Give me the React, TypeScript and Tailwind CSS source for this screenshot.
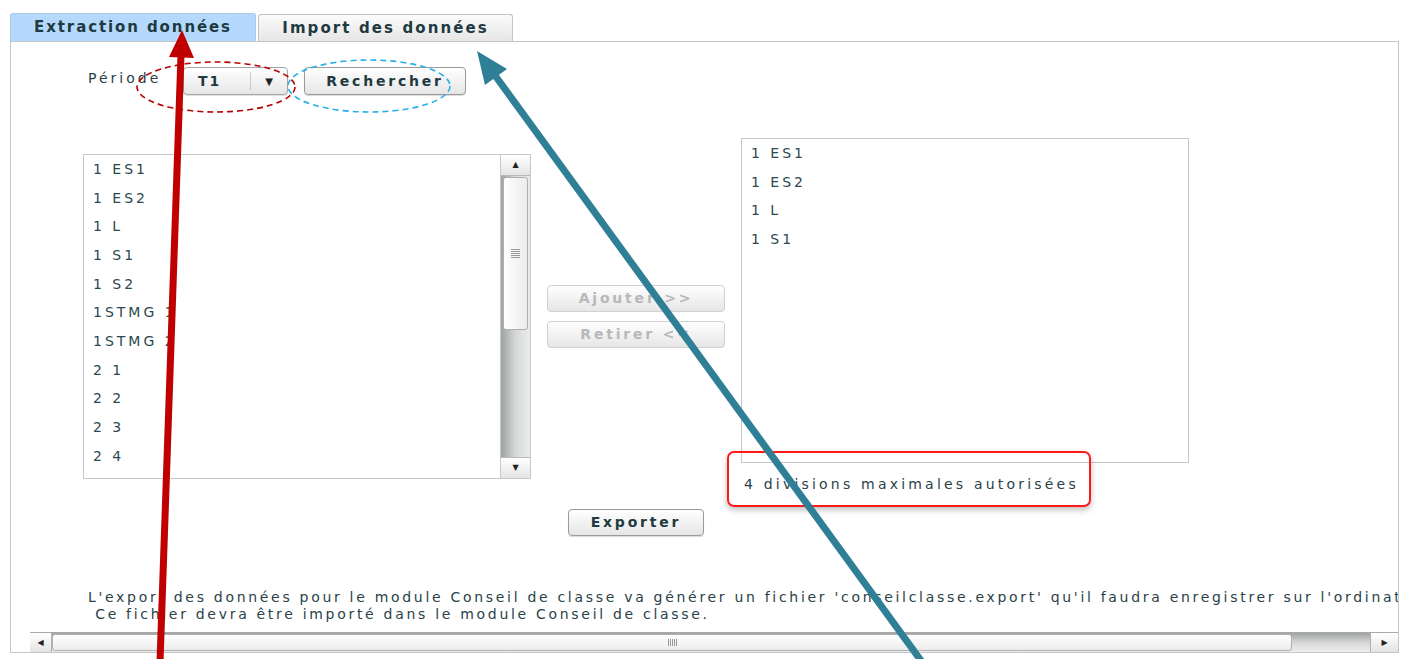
const leftItems = ["1 ES1", "1 ES2", "1 L", "1 S1", "1 S2", "1STMG 1", "1STMG 2", "2 1", "2 2", "2 3", "2 4"];
const rightItems = ["1 ES1", "1 ES2", "1 L", "1 S1"];

const font = { fontFamily: '"DejaVu Sans", Verdana, sans-serif' };

const Btn = ({ label, disabled, className }: { label: string; disabled?: boolean; className: string }) => (
  <button
    className={`${className} rounded-[4px] border text-[14px] font-bold tracking-[2.8px] bg-gradient-to-b from-white to-[#e6e6e6] ${
      disabled ? "border-[#d0d0d0] text-[#b8b8b8]" : "border-[#9a9a9a] text-[#1f3a40] shadow-[0_1px_1px_rgba(0,0,0,0.15)]"
    }`}
  >
    {label}
  </button>
);

const VScroll = () => (
  <div className="w-[30px] h-full flex flex-col border-l border-[#c8c8c8] bg-gradient-to-r from-[#9ea2a2] via-[#d6d8d8] to-[#ececec]">
    <div className="h-[21px] bg-gradient-to-b from-white to-[#e4e4e4] border-b border-[#b8b8b8] flex items-center justify-center text-[8px] text-[#222]">▲</div>
    <div className="h-[153px] mx-[2px] mt-[1px] rounded-[3px] border border-[#b0b0b0] bg-gradient-to-r from-white to-[#ececec] flex items-center justify-center">
      <div className="flex flex-col gap-[1px]">
        <div className="w-[9px] h-[1px] bg-[#999]" />
        <div className="w-[9px] h-[1px] bg-[#999]" />
        <div className="w-[9px] h-[1px] bg-[#999]" />
        <div className="w-[9px] h-[1px] bg-[#999]" />
        <div className="w-[9px] h-[1px] bg-[#999]" />
      </div>
    </div>
    <div className="flex-1" />
    <div className="h-[21px] bg-gradient-to-b from-white to-[#e4e4e4] border-t border-[#b8b8b8] flex items-center justify-center text-[8px] text-[#222]">▼</div>
  </div>
);

const App = () => {
  return (
    <div className="relative w-[1412px] h-[659px] overflow-hidden bg-white" style={font}>
      {/* tabs */}
      <div className="flex items-end pl-[10px] pt-[13px] h-[41px]">
        <div className="w-[246px] h-[28px] bg-[#b4d9fd] rounded-t-[3px] border border-b-0 border-[#a9c9e6] flex items-center justify-center text-[15px] font-bold tracking-[1.9px] text-[#1e3a40]">
          Extraction données
        </div>
        <div className="ml-[2px] w-[255px] h-[27px] rounded-t-[3px] border border-b-0 border-[#c4c4c4] bg-gradient-to-b from-[#fbfbfb] to-[#e6e6e6] flex items-center justify-center text-[15px] font-bold tracking-[2.1px] text-[#1e3a40]">
          Import des données
        </div>
      </div>

      {/* panel */}
      <div className="ml-[10px] w-[1389px] h-[612px] border border-[#c2c6c6] flex flex-col overflow-hidden">
        <div className="flex items-center mt-[25px] pl-[77px] h-[28px]">
          <span className="w-[95px] text-[14px] tracking-[3px] text-[#2b4248] -mt-[6px]">Période</span>
          <div className="w-[105px] h-[28px] rounded-[4px] border border-[#a4a4a4] bg-gradient-to-b from-white to-[#e6e6e6] flex items-center shadow-[0_1px_1px_rgba(0,0,0,0.12)]">
            <span className="pl-[14px] w-[66px] text-[14px] font-bold tracking-[2px] text-[#1f3a40]">T1</span>
            <div className="w-[1px] h-[18px] bg-[#c8c8c8]" />
            <span className="flex-1 text-center text-[10px] text-[#222]">▼</span>
          </div>
          <Btn label="Rechercher" className="ml-[16px] w-[162px] h-[28px]" />
        </div>

        <div className="flex items-start mt-[43px] pl-[72px]">
          {/* left list */}
          <div className="mt-[16px] w-[448px] h-[325px] border border-[#c4c8c8] flex">
            <div className="flex-1 pl-[9px] flex flex-col">
              {leftItems.map((it) => (
                <div key={it} className="h-[28.7px] flex items-center text-[14px] tracking-[3px] text-[#2a4950] whitespace-pre">
                  {it}
                </div>
              ))}
            </div>
            <VScroll />
          </div>

          {/* middle */}
          <div className="ml-[16px] mt-[147px] w-[178px] flex flex-col items-center">
            <Btn label="Ajouter >>" disabled className="w-[178px] h-[27px]" />
            <Btn label="Retirer <<" disabled className="mt-[9px] w-[178px] h-[27px]" />
            <Btn label="Exporter" className="mt-[161px] w-[136px] h-[27px]" />
          </div>

          {/* right list */}
          <div className="ml-[16px] relative">
            <div className="w-[448px] h-[325px] border border-[#c4c8c8] pl-[9px]">
              {rightItems.map((it) => (
                <div key={it} className="h-[28.7px] flex items-center text-[14px] tracking-[3px] text-[#2a4950] whitespace-pre">
                  {it}
                </div>
              ))}
            </div>
            <div className="mt-[11px] pl-[3px] text-[14px] tracking-[3.2px] text-[#2a4248] whitespace-nowrap">4 divisions maximales autorisées</div>
            <div className="absolute left-[-14px] top-[313px] w-[364px] h-[56px] rounded-[7px] border-2 border-[#ff1a1a] shadow-[0_3px_6px_rgba(0,0,0,0.25)]" />
          </div>
        </div>

        <div className="flex-1" />

        <div className="pl-[77px] text-[14px] leading-[17px] tracking-[2.7px] text-[#2a4248] whitespace-pre">
          <div>L'export des données pour le module Conseil de classe va générer un fichier 'conseilclasse.export' qu'il faudra enregistrer sur l'ordinateur.</div>
          <div> Ce fichier devra être importé dans le module Conseil de classe.</div>
        </div>

        {/* horizontal scrollbar */}
        <div className="mt-[9px] ml-[19px] h-[20px] flex border-t border-[#a8a8a8] bg-gradient-to-b from-[#a0a4a4] via-[#d8d8d8] to-[#eeeeee]">
          <div className="w-[22px] bg-gradient-to-b from-white to-[#e4e4e4] border-r border-[#b0b0b0] flex items-center justify-center text-[8px] text-[#222]">◀</div>
          <div className="w-[1240px] my-[1px] rounded-[3px] border border-[#b0b0b0] bg-gradient-to-b from-white to-[#ececec] flex items-center justify-center">
            <div className="flex gap-[1px]">
              <div className="w-[1px] h-[7px] bg-[#999]" />
              <div className="w-[1px] h-[7px] bg-[#999]" />
              <div className="w-[1px] h-[7px] bg-[#999]" />
              <div className="w-[1px] h-[7px] bg-[#999]" />
              <div className="w-[1px] h-[7px] bg-[#999]" />
            </div>
          </div>
          <div className="flex-1" />
          <div className="w-[28px] bg-gradient-to-b from-white to-[#e4e4e4] border-l border-[#b0b0b0] flex items-center justify-center text-[8px] text-[#222]">▶</div>
        </div>
      </div>

      {/* annotations */}
      <svg className="absolute inset-0 pointer-events-none" width="1412" height="659">
        <ellipse cx="216" cy="87" rx="79" ry="25" fill="none" stroke="#b80000" strokeWidth="1.6" strokeDasharray="6 4" />
        <ellipse cx="369" cy="86" rx="81" ry="26" fill="none" stroke="#25b0ea" strokeWidth="1.6" strokeDasharray="6 4" />
        <line x1="160" y1="662" x2="181" y2="55" stroke="#c00000" strokeWidth="7" />
        <polygon points="182,30 194,58 169,57" fill="#c00000" />
        <line x1="922" y1="662" x2="494" y2="74" stroke="#2f7f97" strokeWidth="7" />
        <polygon points="477,51 507,69 485,85" fill="#2f7f97" />
      </svg>
    </div>
  );
};

export default App;
